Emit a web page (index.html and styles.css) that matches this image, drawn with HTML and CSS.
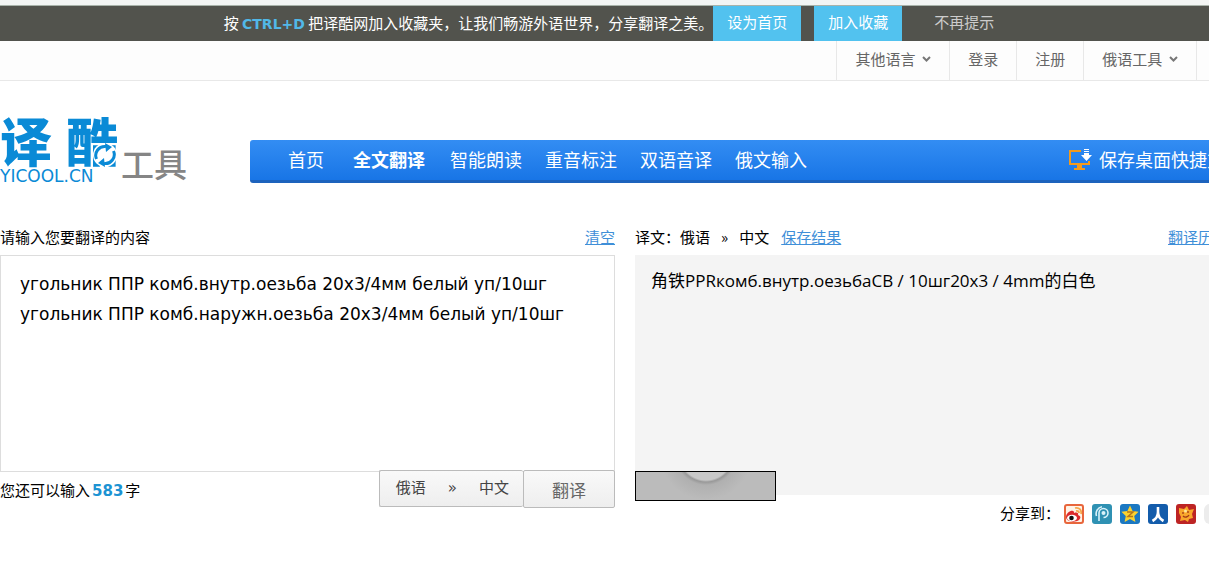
FILE: index.html
```html
<!DOCTYPE html>
<html lang="zh-CN">
<head>
    <meta charset="UTF-8">
    <meta name="viewport" content="width=device-width, initial-scale=1.0">
    <title>译酷工具</title>
    <link rel="stylesheet" href="styles.css">
</head>
<body>
    <div class="notice">
        <p class="notice-text">按 <strong>CTRL+D</strong> 把译酷网加入收藏夹，让我们畅游外语世界，分享翻译之美。</p>
        <button class="notice-button" type="button">设为首页</button>
        <button class="notice-button" type="button">加入收藏</button>
        <button class="notice-close" type="button">不再提示</button>
    </div>

    <div class="page">
        <nav class="top-nav">
            <a href="#">其他语言
                <svg class="chevron" viewBox="0 0 9 6"><path d="M1 1l3.500 3.500L8 1"/></svg>
            </a>
            <a href="#">登录</a>
            <a href="#">注册</a>
            <a href="#">俄语工具
                <svg class="chevron" viewBox="0 0 9 6"><path d="M1 1l3.500 3.500L8 1"/></svg>
            </a>
        </nav>

        <header class="header">
            <a class="logo" href="#">
                <span class="logo-mark">
                    <span class="logo-name"><span>译</span><span>酷</span></span>
                    <span class="logo-domain">YICOOL.CN</span>
                    <svg class="logo-arrows" viewBox="0 0 24 24">
                        <circle cx="12" cy="12" r="12" fill="#fff"/>
                        <path d="M3.500 16A9 9 0 0 1 13 3.500M20.500 8A9 9 0 0 1 11 20.500" fill="none" stroke="#0a8ad6" stroke-width="3"/>
                        <path d="M12 0l7 4-6 5zM12 24l-7-4 6-5z" fill="#0a8ad6"/>
                    </svg>
                </span>
                <span class="logo-sub">工具</span>
            </a>
            <nav class="main-nav">
                <a class="home" href="#">首页</a>
                <a class="active" href="#">全文翻译</a>
                <a href="#">智能朗读</a>
                <a href="#">重音标注</a>
                <a href="#">双语音译</a>
                <a href="#">俄文输入</a>
                <a class="shortcut" href="#">
                    <svg class="monitor" viewBox="0 0 22 22">
                        <path d="M12 2H1v13h19v-3" fill="none" stroke="#f39a1d" stroke-width="2"/>
                        <path d="M8 16h5v3h3v2H5v-2h3z" fill="#f39a1d"/>
                        <path d="M15 0h5v1h-5zM15 2h5v1h-5zM15 4h5v2h3l-5.500 6L12 6h3z" fill="#fff"/>
                    </svg>
                    保存桌面快捷方式
                </a>
            </nav>
        </header>

        <main class="translator">
            <section class="source">
                <div class="panel-head">
                    <label for="source-text">请输入您要翻译的内容</label>
                    <a class="link" href="#">清空</a>
                </div>
                <textarea id="source-text" spellcheck="false">угольник ППР комб.внутр.оезьба 20х3/4мм белый уп/10шг
угольник ППР комб.наружн.оезьба 20х3/4мм белый уп/10шг</textarea>
                <div class="source-foot">
                    <p>您还可以输入<strong>583</strong>字</p>
                    <div class="actions">
                        <button class="direction" type="button"><span>俄语</span><span>»</span><span>中文</span></button>
                        <button class="translate" type="button">翻译</button>
                    </div>
                </div>
            </section>

            <section class="result">
                <div class="panel-head">
                    <p class="pair">译文：俄语<span>»</span>中文</p>
                    <a class="link" href="#">保存结果</a>
                    <a class="link history" href="#">翻译历史</a>
                </div>
                <div class="result-box">
                    <p>角铁PPRкомб.внутр.оезьбаСВ / 10шг20х3 / 4mm的白色</p>
                    <button class="player" type="button" aria-label="朗读"></button>
                </div>
                <div class="share">
                    <span class="share-label">分享到：</span>
                    <a href="#" aria-label="新浪微博">
                        <svg viewBox="0 0 20 20">
                            <rect x="1" y="1" width="18" height="18" rx="2" fill="#fff3e6" stroke="#e8663c" stroke-width="2"/>
                            <path d="M2 13c0-4 5-7 7-6 1 0 1 1 1 2 3-1 5 0 4 2 3 1 3 3 1 5-4 3-13 2-13-3z" fill="#dc2a2c"/>
                            <ellipse cx="8" cy="14" rx="5" ry="3.200" fill="#fff"/>
                            <circle cx="7.500" cy="14" r="2.300" fill="#111"/>
                            <path d="M11 4c4-1 7 2 6 6M12 7c2-.500 3 .500 3 2" fill="none" stroke="#f4a64b" stroke-width="1.800"/>
                        </svg>
                    </a>
                    <a href="#" aria-label="腾讯微博">
                        <svg viewBox="0 0 20 20">
                            <rect width="20" height="20" rx="3" fill="#2f91b3"/>
                            <path d="M7 17V9a4.500 4.500 0 1 1 4.500 4.500M4.500 12A7 7 0 0 1 10 2.800" fill="none" stroke="#d9f2fa" stroke-width="1.600"/>
                            <circle cx="11.500" cy="9" r="2" fill="#d9f2fa"/>
                        </svg>
                    </a>
                    <a href="#" aria-label="QQ空间">
                        <svg viewBox="0 0 20 20">
                            <rect width="20" height="20" rx="3" fill="#1b78c2"/>
                            <path d="M10 1.500l2.600 5.500 6 .700-4.400 4.200 1.200 6.100L10 15l-5.400 3 1.200-6.100L1.400 7.700l6-.700z" fill="#fcd22f"/>
                            <path d="M7 8h6l-5 4.500h5" fill="none" stroke="#b5761b" stroke-width="1.500"/>
                        </svg>
                    </a>
                    <a href="#" aria-label="人人网">
                        <svg viewBox="0 0 20 20">
                            <rect width="20" height="20" rx="3" fill="#135cab"/>
                            <path d="M10 3v5c0 4-2 7-5.500 9M10 8c0 4 2 7 5.500 9" fill="none" stroke="#fff" stroke-width="2.600"/>
                        </svg>
                    </a>
                    <a href="#" aria-label="开心网">
                        <svg viewBox="0 0 20 20">
                            <rect width="20" height="20" rx="3" fill="#bd2424"/>
                            <path d="M3 4l5 1 3-3 2 4 5-1-2 5 1 4-4 1-1 3-3-2-5 1 1-4-2-4z" fill="#f9a72b"/>
                            <path d="M7 8v2M12 7v2M7 12c2 2 5 1 6-1" fill="none" stroke="#a33a16" stroke-width="1.300"/>
                            <circle cx="9.500" cy="7" r="1.500" fill="#ffe79a"/>
                        </svg>
                    </a>
                    <a href="#" aria-label="更多">
                        <svg viewBox="0 0 20 20"><rect width="20" height="20" rx="6" fill="#ececec"/></svg>
                    </a>
                </div>
            </section>
        </main>
    </div>
</body>
</html>
```
FILE: styles.css
```css
* {
    box-sizing: border-box;
}
body {
    margin: 0;
    overflow-x: hidden;
    background-color: #fff;
    color: #000;
    font-family: "DejaVu Sans", "Noto Sans CJK SC", sans-serif;
    font-size: 15px;
    line-height: 20px;
}
p {
    margin: 0;
}
a {
    color: inherit;
    text-decoration: none;
}
button {
    font: inherit;
    cursor: pointer;
}

/* Bookmark notice */
.notice {
    display: flex;
    justify-content: center;
    height: 41px;
    padding-left: 28px;
    border-top: 5px solid #f3f5f4;
    background-color: #52534d;
    box-shadow: inset 0 1px #a9b3aa;
    color: #fff;
    line-height: 35px;
    white-space: nowrap;
}
.notice-text {
    font-family: "Noto Sans CJK SC", sans-serif;
}
.notice-text strong {
    color: #51b8e8;
    font-family: "DejaVu Sans", sans-serif;
    font-size: 14px;
}
.notice-button {
    margin: 1px 13px 0 0;
    padding: 0 14px;
    border: none;
    background-color: #52c2ef;
    color: #fff;
}
.notice-close {
    padding: 0 19px;
    border: none;
    background: none;
    color: #ccc;
}

/* The page keeps its desktop width on small windows */
.page {
    min-width: 1250px;
}
.top-nav {
    display: flex;
    justify-content: flex-end;
    height: 40px;
    padding-right: 53px;
    border-bottom: 1px solid #e8e8e8;
    background-color: #fdfdfd;
    color: #666;
    line-height: 38px;
}
.top-nav a {
    padding: 0 18px;
    border-left: 1px solid #e8e8e8;
}
.top-nav a:last-child {
    border-right: 1px solid #e8e8e8;
}
.chevron {
    width: 9px;
    height: 6px;
    margin-left: 2px;
    vertical-align: 3px;
    fill: none;
    stroke: #777;
    stroke-width: 2;
}

/* Logo and main menu */
.header {
    display: grid;
    grid-template-columns: 250px 1fr;
    padding-top: 28px;
}
.logo {
    display: flex;
    align-items: flex-end;
    height: 74px;
}
.logo-mark {
    position: relative;
    display: flex;
    flex-direction: column;
    width: 121px;
    color: #0a8ad6;
}
.logo-name {
    display: flex;
    gap: 14px;
    font-family: "Noto Sans CJK SC", sans-serif;
    font-size: 52px;
    font-weight: 900;
    line-height: 54px;
}
.logo-domain {
    padding-top: 3px;
    font-size: 17px;
    line-height: 13px;
}
.logo-arrows {
    position: absolute;
    right: 4px;
    bottom: 16px;
    width: 24px;
    height: 24px;
}
.logo-sub {
    color: #858585;
    font-family: "Noto Sans CJK SC", sans-serif;
    font-size: 33px;
    font-weight: 500;
    line-height: 39px;
}
.main-nav {
    display: flex;
    gap: 23px;
    height: 43px;
    margin-top: 31px;
    padding: 0 7px 0 38px;
    border-bottom: 3px solid #1d63bd;
    border-radius: 3px;
    background: linear-gradient(#338df3, #1875e6);
    color: #fff;
    font-size: 18px;
    line-height: 41px;
}
.main-nav .home {
    margin-right: 6px;
}
.main-nav .active {
    margin-right: 2px;
    font-weight: bold;
}
.shortcut {
    display: flex;
    align-items: center;
    gap: 8px;
    margin-left: auto;
}
.monitor {
    width: 22px;
    height: 22px;
    overflow: visible;
}

/* Translator */
.translator {
    display: grid;
    grid-template-columns: 1fr 1fr;
    gap: 20px;
    padding-top: 36px;
}
.panel-head {
    display: flex;
    justify-content: space-between;
    height: 36px;
    font-family: "Noto Sans CJK SC", sans-serif;
    line-height: 36px;
}
.link {
    color: #3f8fd8;
    text-decoration: underline;
}
.source textarea {
    display: block;
    width: 100%;
    height: 217px;
    padding: 13px 19px;
    border: 1px solid #ddd;
    background-color: #fff;
    color: #000;
    font-family: "DejaVu Sans", sans-serif;
    font-size: 17px;
    line-height: 30px;
    outline: none;
    resize: none;
}
.source-foot {
    display: flex;
    justify-content: space-between;
    line-height: 38px;
}
.source-foot strong {
    margin: 0 2px;
    color: #1c93d3;
}
.actions {
    display: flex;
    align-items: flex-start;
    margin-top: -2px;
}
.actions button {
    border: 1px solid #bbb;
    border-radius: 2px;
    background: linear-gradient(#f9f9f9, #eee);
    color: #444;
}
.actions .direction {
    display: flex;
    gap: 22px;
    height: 37px;
    padding: 0 14px 0 16px;
    border-right: none;
    line-height: 35px;
}
.actions .translate {
    width: 92px;
    height: 38px;
    color: #666;
    font-size: 17px;
}
.result .panel-head {
    justify-content: flex-start;
    gap: 12px;
    padding-right: 22px;
}
.pair span {
    margin: 0 11px;
}
.history {
    margin-left: auto;
}
.result-box {
    position: relative;
    height: 240px;
    padding: 11px 16px;
    background-color: #f4f4f4;
    font-family: "Open Sans", "Noto Sans CJK SC", sans-serif;
    font-size: 17px;
    line-height: 30px;
}
/* Speech player hanging over the lower edge of the result */
.player {
    position: absolute;
    left: 0;
    top: 216px;
    width: 141px;
    height: 30px;
    border: 1px solid #000;
    background: radial-gradient(circle at 70px -18px, #c8c8c8 26px, #999 28px, #b0b0b0 31px, #bbb 46px);
}
.share {
    display: flex;
    justify-content: flex-end;
    align-items: center;
    gap: 8px;
    height: 38px;
    padding-right: 26px;
}
.share-label {
    margin-right: -4px;
}
.share svg {
    display: block;
    width: 20px;
    height: 20px;
}
```
